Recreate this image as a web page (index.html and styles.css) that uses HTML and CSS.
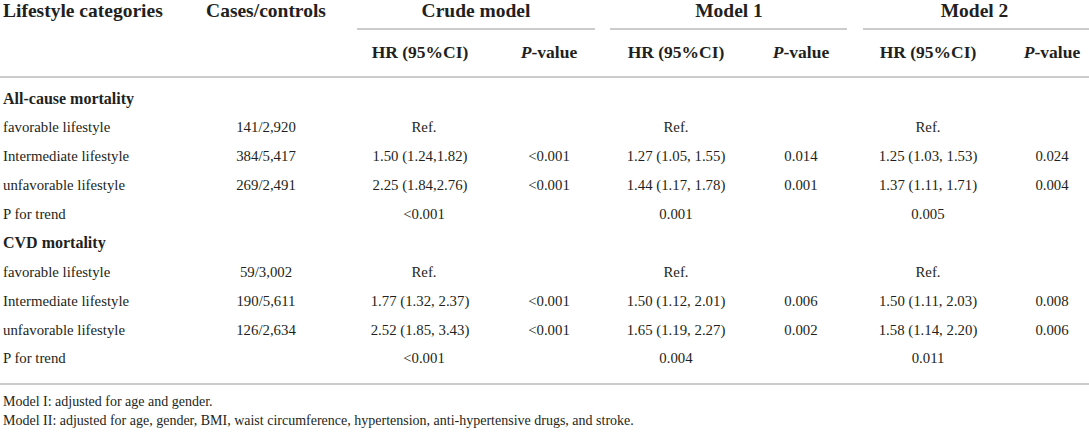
FILE: index.html
```html
<!DOCTYPE html>
<html lang="en">
<head>
    <meta charset="UTF-8">
    <meta name="viewport" content="width=device-width, initial-scale=1.0">
    <title>Lifestyle categories and mortality</title>
    <link rel="stylesheet" href="styles.css">
</head>
<body>

<table class="results">
    <colgroup>
        <col class="w-label">
        <col class="w-cases">
        <col class="w-crude-hr">
        <col class="w-crude-p">
        <col class="w-m1-hr">
        <col class="w-m1-p">
        <col class="w-m2-hr">
        <col class="w-m2-p">
    </colgroup>
    <thead>
        <tr class="head-top">
            <th rowspan="2" class="label">Lifestyle categories</th>
            <th rowspan="2">Cases/controls</th>
            <th colspan="2" class="grp grp-crude">Crude model</th>
            <th colspan="2" class="grp grp-m1">Model 1</th>
            <th colspan="2" class="grp grp-m2">Model 2</th>
        </tr>
        <tr class="head-sub">
            <th class="crude">HR (95%CI)</th>
            <th><i>P</i>-value</th>
            <th>HR (95%CI)</th>
            <th><i>P</i>-value</th>
            <th>HR (95%CI)</th>
            <th class="last-col"><i>P</i>-value</th>
        </tr>
    </thead>
    <tbody>
        <tr class="section first">
            <td colspan="8" class="label">All-cause mortality</td>
        </tr>
        <tr>
            <td class="label">favorable lifestyle</td>
            <td>141/2,920</td>
            <td class="crude ref">Ref.</td>
            <td></td>
            <td>Ref.</td>
            <td></td>
            <td>Ref.</td>
            <td class="last-col"></td>
        </tr>
        <tr>
            <td class="label">Intermediate lifestyle</td>
            <td>384/5,417</td>
            <td class="crude">1.50 (1.24,1.82)</td>
            <td>&lt;0.001</td>
            <td>1.27 (1.05, 1.55)</td>
            <td>0.014</td>
            <td>1.25 (1.03, 1.53)</td>
            <td class="last-col">0.024</td>
        </tr>
        <tr>
            <td class="label">unfavorable lifestyle</td>
            <td>269/2,491</td>
            <td class="crude">2.25 (1.84,2.76)</td>
            <td>&lt;0.001</td>
            <td>1.44 (1.17, 1.78)</td>
            <td>0.001</td>
            <td>1.37 (1.11, 1.71)</td>
            <td class="last-col">0.004</td>
        </tr>
        <tr>
            <td class="label">P for trend</td>
            <td></td>
            <td class="crude ref">&lt;0.001</td>
            <td></td>
            <td>0.001</td>
            <td></td>
            <td>0.005</td>
            <td class="last-col"></td>
        </tr>
        <tr class="section">
            <td colspan="8" class="label">CVD mortality</td>
        </tr>
        <tr>
            <td class="label">favorable lifestyle</td>
            <td>59/3,002</td>
            <td class="crude ref">Ref.</td>
            <td></td>
            <td>Ref.</td>
            <td></td>
            <td>Ref.</td>
            <td class="last-col"></td>
        </tr>
        <tr>
            <td class="label">Intermediate lifestyle</td>
            <td>190/5,611</td>
            <td class="crude">1.77 (1.32, 2.37)</td>
            <td>&lt;0.001</td>
            <td>1.50 (1.12, 2.01)</td>
            <td>0.006</td>
            <td>1.50 (1.11, 2.03)</td>
            <td class="last-col">0.008</td>
        </tr>
        <tr>
            <td class="label">unfavorable lifestyle</td>
            <td>126/2,634</td>
            <td class="crude">2.52 (1.85, 3.43)</td>
            <td>&lt;0.001</td>
            <td>1.65 (1.19, 2.27)</td>
            <td>0.002</td>
            <td>1.58 (1.14, 2.20)</td>
            <td class="last-col">0.006</td>
        </tr>
        <tr class="last">
            <td class="label">P for trend</td>
            <td></td>
            <td class="crude ref">&lt;0.001</td>
            <td></td>
            <td>0.004</td>
            <td></td>
            <td>0.011</td>
            <td class="last-col"></td>
        </tr>
    </tbody>
</table>

<div class="notes">
    <p>Model I: adjusted for age and gender.</p>
    <p>Model II: adjusted for age, gender, BMI, waist circumference, hypertension, anti-hypertensive drugs, and stroke.</p>
</div>

</body>
</html>
```

FILE: styles.css
```css
body {
    margin: 0;
    background: #ffffff;
    color: #231f20;
    font-family: "Liberation Serif", "Times New Roman", serif;
    overflow: hidden;
}

.results {
    width: 1089px;
    table-layout: fixed;
    border-collapse: collapse;
    font-size: 14.8px;
}

.w-label { width: 200px; }
.w-cases { width: 132px; }
.w-crude-hr { width: 168px; }
.w-crude-p { width: 98px; }
.w-m1-hr { width: 156px; }
.w-m1-p { width: 94px; }
.w-m2-hr { width: 160px; }
.w-m2-p { width: 81px; }

th, td {
    padding: 0;
    text-align: center;
    white-space: nowrap;
}

.label { text-align: left; padding-left: 3px; }

/* header */
thead {
    border-bottom: 2px solid #cccccc;
}
thead th {
    font-weight: bold;
    line-height: 20px;
}
.head-top th {
    font-size: 19.5px;
    vertical-align: top;
    padding-top: 1px;
}
.grp { padding-left: 12px; }
.grp-crude { padding-left: 22px; }
.grp::after {
    content: "";
    display: block;
    height: 2px;
    margin-top: 7px;
    background: #cccccc;
}
.grp-crude::after { margin-left: 3px; margin-right: 3px; }
.grp-m1::after { margin-left: 0; margin-right: 1px; }
.grp-m2::after { margin-left: 3px; }

.head-sub th {
    font-size: 17.5px;
    padding-top: 12px;
    padding-bottom: 14px;
}
.last-col { padding-left: 7px; }

/* body */
tbody {
    border-bottom: 2px solid #cccccc;
}
tbody td {
    height: 28.9px;
    line-height: 20px;
}
.crude { padding-left: 8px; }
.crude.ref { padding-left: 16px; }
.section td { font-weight: bold; font-size: 16px; }
.first td { padding-top: 8px; height: 26.9px; }
.last td { padding-bottom: 10px; }

/* footnotes */
.notes {
    padding: 7px 0 0 3px;
    font-size: 14px;
    line-height: 19px;
}
.notes p { margin: 0; }
```
